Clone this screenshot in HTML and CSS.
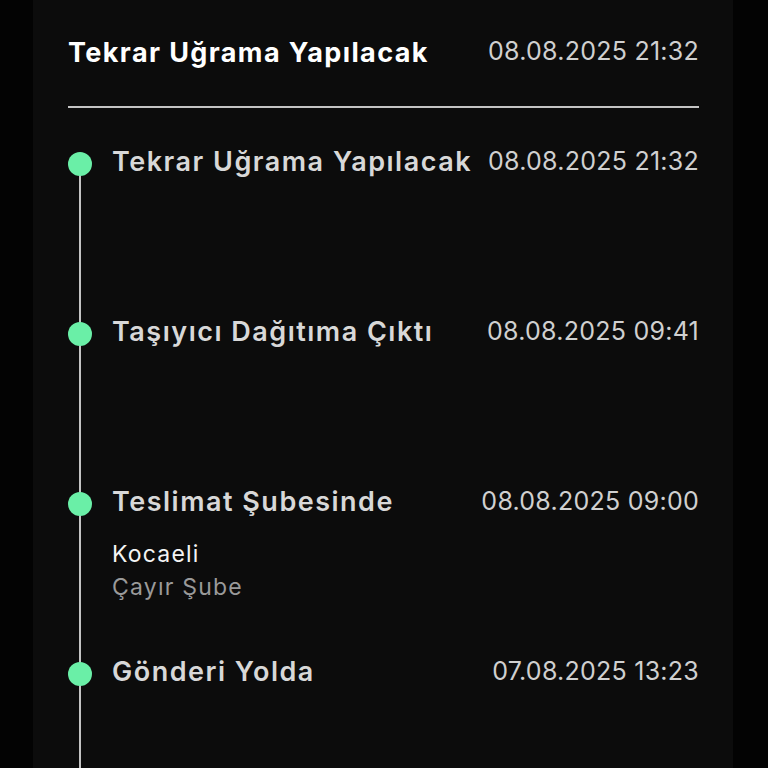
FILE: index.html
```html
<!DOCTYPE html>
<html lang="tr">
<head>
    <meta charset="UTF-8">
    <meta name="viewport" content="width=device-width, initial-scale=1.0">
    <title>Gönderi Takibi</title>
    <link rel="stylesheet" href="styles.css">
</head>
<body>
    <section class="track-card">
        <header class="track-header">
            <h1 class="track-title">Tekrar Uğrama Yapılacak</h1>
            <span class="track-date">08.08.2025 21:32</span>
        </header>
        <ul class="timeline">
            <li class="timeline-item">
                <div class="marker"><span class="dot"></span></div>
                <div class="event">
                    <div class="event-head">
                        <p class="event-title">Tekrar Uğrama Yapılacak</p>
                        <span class="event-date">08.08.2025 21:32</span>
                    </div>
                </div>
            </li>
            <li class="timeline-item">
                <div class="marker"><span class="dot"></span></div>
                <div class="event">
                    <div class="event-head">
                        <p class="event-title">Taşıyıcı Dağıtıma Çıktı</p>
                        <span class="event-date">08.08.2025 09:41</span>
                    </div>
                </div>
            </li>
            <li class="timeline-item">
                <div class="marker"><span class="dot"></span></div>
                <div class="event">
                    <div class="event-head">
                        <p class="event-title">Teslimat Şubesinde</p>
                        <span class="event-date">08.08.2025 09:00</span>
                    </div>
                    <div class="event-place">
                        <p class="place-city">Kocaeli</p>
                        <p class="place-branch">Çayır Şube</p>
                    </div>
                </div>
            </li>
            <li class="timeline-item">
                <div class="marker"><span class="dot"></span></div>
                <div class="event">
                    <div class="event-head">
                        <p class="event-title">Gönderi Yolda</p>
                        <span class="event-date">07.08.2025 13:23</span>
                    </div>
                </div>
            </li>
        </ul>
    </section>
</body>
</html>
```

FILE: styles.css
```css
* {
    margin: 0;
    padding: 0;
    box-sizing: border-box;
}
body {
    background-color: #030303;
    font-family: Inter, "Noto Sans", sans-serif;
    height: 100vh;
    overflow: hidden;
}
.track-card {
    margin-left: 33px;
    width: 700px;
    min-height: 100vh;
    background-color: #0c0c0c;
    padding: 37px 34px 0 35px;
}
.track-header {
    display: flex;
    justify-content: space-between;
    align-items: flex-start;
    padding-bottom: 37px;
    border-bottom: solid 2px #c4c4c4;
}
.track-title {
    font-size: 27px;
    font-weight: 700;
    line-height: 32px;
    letter-spacing: 1.4px;
    color: #ffffff;
}
.track-date {
    font-size: 25px;
    line-height: 28px;
    letter-spacing: 0.25px;
    color: #d0d0d0;
}
.timeline {
    list-style: none;
    padding-top: 44px;
}
.timeline-item {
    display: flex;
    gap: 20px;
    height: 170px;
}
.marker {
    width: 24px;
    flex-shrink: 0;
    background: linear-gradient(#c4c4c4, #c4c4c4) center / 2px 100% no-repeat;
}
.timeline-item:first-child .marker {
    background-position: center bottom;
    background-size: 2px calc(100% - 12px);
}
.dot {
    display: block;
    width: 24px;
    height: 24px;
    border-radius: 50%;
    background-color: #6aefa7;
}
.event {
    flex: 1;
}
.event-head {
    display: flex;
    justify-content: space-between;
    align-items: center;
    height: 24px;
}
.event-title {
    font-size: 27px;
    font-weight: 600;
    line-height: 24px;
    letter-spacing: 1.5px;
    margin-bottom: 4px;
    color: #d8d8d8;
}
.event-date {
    font-size: 25px;
    line-height: 24px;
    letter-spacing: 0.25px;
    margin-bottom: 6px;
    color: #d0d0d0;
}
.event-place {
    margin-top: 22px;
    font-size: 23px;
    line-height: 33px;
    letter-spacing: 1.2px;
}
.place-city {
    color: #f4f4f4;
}
.place-branch {
    color: #9a9a9a;
}
```
